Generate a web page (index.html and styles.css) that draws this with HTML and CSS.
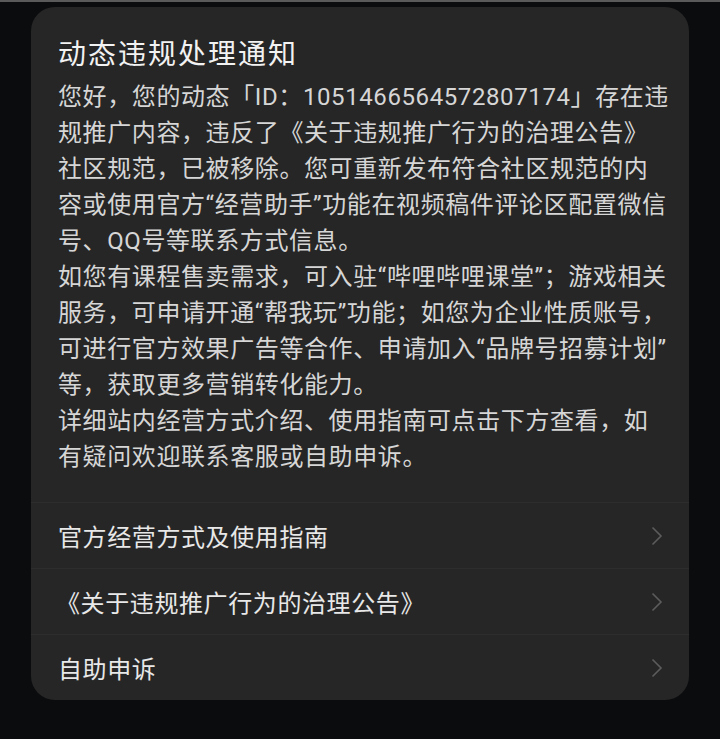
FILE: index.html
```html
<!DOCTYPE html>
<html lang="zh-CN">
<head>
  <meta charset="UTF-8" />
  <meta name="viewport" content="width=device-width, initial-scale=1.0" />
  <title>动态违规处理通知</title>
  <link rel="stylesheet" href="styles.css">
</head>
<body>

  <div class="topbar"></div>

  <!-- 通知卡片 -->
  <div class="card">
    <div class="notice">
      <h1>动态违规处理通知</h1>
      <p class="content">
        您好，您的动态「ID：1051466564572807174」存在违<br>
        规推广内容，违反了《关于违规推广行为的治理公告》<br>
        社区规范，已被移除。您可重新发布符合社区规范的内<br>
        容或使用官方“经营助手”功能在视频稿件评论区配置微信<br>
        号、QQ号等联系方式信息。<br>
        如您有课程售卖需求，可入驻“哔哩哔哩课堂”；游戏相关<br>
        服务，可申请开通“帮我玩”功能；如您为企业性质账号，<br>
        可进行官方效果广告等合作、申请加入“品牌号招募计划”<br>
        等，获取更多营销转化能力。<br>
        详细站内经营方式介绍、使用指南可点击下方查看，如<br>
        有疑问欢迎联系客服或自助申诉。
      </p>
    </div>

    <!-- 链接列表 -->
    <div class="links">
      <div class="link-row">
        <span>官方经营方式及使用指南</span>
        <svg class="arrow" viewBox="0 0 12 20"><path d="M1.5 1.5 L10 10 L1.5 18.5" /></svg>
      </div>
      <div class="link-row">
        <span class="quoted">《关于违规推广行为的治理公告》</span>
        <svg class="arrow" viewBox="0 0 12 20"><path d="M1.5 1.5 L10 10 L1.5 18.5" /></svg>
      </div>
      <div class="link-row">
        <span>自助申诉</span>
        <svg class="arrow" viewBox="0 0 12 20"><path d="M1.5 1.5 L10 10 L1.5 18.5" /></svg>
      </div>
    </div>
  </div>

</body>
</html>
```

FILE: styles.css
```css
* { margin: 0; padding: 0; box-sizing: border-box; }
body, html { width: 100%; height: 100%; font-family: Roboto, "Noto Sans CJK SC", sans-serif; background-color: #0b0c0e; color: #d8d8d8; }

.topbar { height: 2px; background: #5a5a5a; }

/* 卡片 */
.card { width: 658px; margin: 5px 0 0 31px; background: #262626; border-radius: 24px; overflow: hidden; }
.notice { padding: 28px 20px 27px 27px; }
.notice h1 { font-size: 28px; font-weight: 400; line-height: 40px; letter-spacing: 2px; color: #f2f2f2; }
.content { margin-top: 4px; font-size: 24px; line-height: 36px; letter-spacing: 0.6px; white-space: nowrap; color: #d6d6d6; }

/* 列表 */
.link-row { display: flex; justify-content: space-between; align-items: center; height: 66px; padding: 0 26px 0 27px; border-top: 1px solid #2d2d2d; font-size: 24px; letter-spacing: 0.6px; color: #e8e8e8; }
.link-row .quoted { margin-left: -2px; }
.arrow { width: 12px; height: 20px; fill: none; stroke: #5c5c5c; stroke-width: 1.6; }
```
